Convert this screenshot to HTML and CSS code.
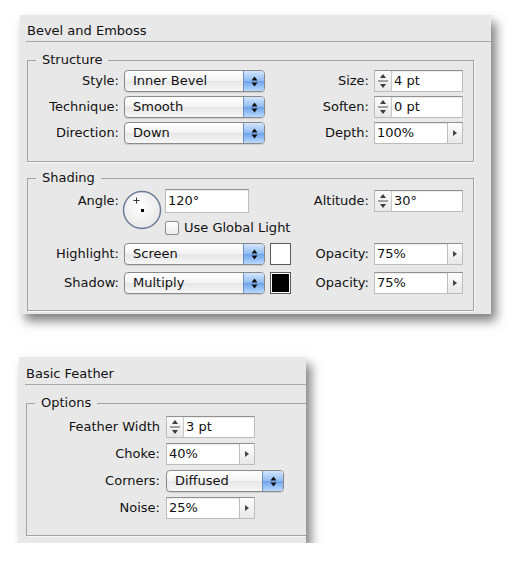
FILE: index.html
```html
<!DOCTYPE html>
<html>
<head>
    <title>Effects</title>
    <link rel="stylesheet" href="styles.css">
</head>
<body>
    <div class="page">
        <!-- Bevel and Emboss panel -->
        <section class="panel panel-bevel">
            <h2 class="panel-title">Bevel and Emboss</h2>

            <fieldset class="group group-structure">
                <legend>Structure</legend>
                <div class="grid grid-structure">
                    <label>Style:</label>
                    <div class="popup">
                        <span class="popup-value">Inner Bevel</span>
                        <span class="popup-arrows"><svg width="7" height="11" viewBox="0 0 7 11"><polygon points="0.5,4.5 3.5,0.5 6.5,4.5"/><polygon points="0.5,6.5 3.5,10.5 6.5,6.5"/></svg></span>
                    </div>
                    <label class="label-right">Size:</label>
                    <div class="field">
                        <span class="stepper"><svg width="16" height="20" viewBox="0 0 16 20"><polygon points="5,7 8,3 11,7"/><line x1="3" y1="10" x2="13" y2="10"/><polygon points="5,13 8,17 11,13"/></svg></span>
                        <span class="field-value">4 pt</span>
                    </div>

                    <label>Technique:</label>
                    <div class="popup">
                        <span class="popup-value">Smooth</span>
                        <span class="popup-arrows"><svg width="7" height="11" viewBox="0 0 7 11"><polygon points="0.5,4.5 3.5,0.5 6.5,4.5"/><polygon points="0.5,6.5 3.5,10.5 6.5,6.5"/></svg></span>
                    </div>
                    <label class="label-right">Soften:</label>
                    <div class="field">
                        <span class="stepper"><svg width="16" height="20" viewBox="0 0 16 20"><polygon points="5,7 8,3 11,7"/><line x1="3" y1="10" x2="13" y2="10"/><polygon points="5,13 8,17 11,13"/></svg></span>
                        <span class="field-value">0 pt</span>
                    </div>

                    <label>Direction:</label>
                    <div class="popup">
                        <span class="popup-value">Down</span>
                        <span class="popup-arrows"><svg width="7" height="11" viewBox="0 0 7 11"><polygon points="0.5,4.5 3.5,0.5 6.5,4.5"/><polygon points="0.5,6.5 3.5,10.5 6.5,6.5"/></svg></span>
                    </div>
                    <label class="label-right">Depth:</label>
                    <div class="field">
                        <span class="field-value">100%</span>
                        <span class="slider-btn"><svg width="4" height="6" viewBox="0 0 4 6"><polygon points="0,0 4,3 0,6"/></svg></span>
                    </div>
                </div>
            </fieldset>

            <fieldset class="group group-shading">
                <legend>Shading</legend>
                <div class="grid grid-shading">
                    <label class="label-top">Angle:</label>
                    <div class="angle">
                        <svg class="dial" width="40" height="40" viewBox="0 0 40 40">
                            <defs>
                                <radialGradient id="dialFill" cx="0.45" cy="0.4" r="0.65">
                                    <stop offset="0" stop-color="#ffffff"/>
                                    <stop offset="1" stop-color="#e6e6e6"/>
                                </radialGradient>
                            </defs>
                            <circle cx="20" cy="20" r="18.5" fill="url(#dialFill)" stroke="#6d7b98" stroke-width="1.5"/>
                            <g stroke="#333" stroke-width="1">
                                <line x1="11.5" y1="10.5" x2="17.5" y2="10.5"/>
                                <line x1="14.5" y1="7.5" x2="14.5" y2="13.5"/>
                            </g>
                            <rect x="19" y="19" width="3" height="3" fill="#000"/>
                        </svg>
                        <div class="angle-side">
                            <div class="field field-angle">
                                <span class="field-value">120°</span>
                            </div>
                            <label class="check">
                                <span class="checkbox"></span>
                                Use Global Light
                            </label>
                        </div>
                    </div>
                    <label class="label-right label-top">Altitude:</label>
                    <div class="field field-top">
                        <span class="stepper"><svg width="16" height="20" viewBox="0 0 16 20"><polygon points="5,7 8,3 11,7"/><line x1="3" y1="10" x2="13" y2="10"/><polygon points="5,13 8,17 11,13"/></svg></span>
                        <span class="field-value">30°</span>
                    </div>

                    <label>Highlight:</label>
                    <div class="popup">
                        <span class="popup-value">Screen</span>
                        <span class="popup-arrows"><svg width="7" height="11" viewBox="0 0 7 11"><polygon points="0.5,4.5 3.5,0.5 6.5,4.5"/><polygon points="0.5,6.5 3.5,10.5 6.5,6.5"/></svg></span>
                    </div>
                    <span class="swatch"><span class="swatch-color swatch-white"></span></span>
                    <label class="label-right">Opacity:</label>
                    <div class="field">
                        <span class="field-value">75%</span>
                        <span class="slider-btn"><svg width="4" height="6" viewBox="0 0 4 6"><polygon points="0,0 4,3 0,6"/></svg></span>
                    </div>

                    <label>Shadow:</label>
                    <div class="popup">
                        <span class="popup-value">Multiply</span>
                        <span class="popup-arrows"><svg width="7" height="11" viewBox="0 0 7 11"><polygon points="0.5,4.5 3.5,0.5 6.5,4.5"/><polygon points="0.5,6.5 3.5,10.5 6.5,6.5"/></svg></span>
                    </div>
                    <span class="swatch"><span class="swatch-color swatch-black"></span></span>
                    <label class="label-right">Opacity:</label>
                    <div class="field">
                        <span class="field-value">75%</span>
                        <span class="slider-btn"><svg width="4" height="6" viewBox="0 0 4 6"><polygon points="0,0 4,3 0,6"/></svg></span>
                    </div>
                </div>
            </fieldset>
        </section>

        <!-- Basic Feather panel -->
        <section class="panel panel-feather">
            <h2 class="panel-title">Basic Feather</h2>

            <fieldset class="group group-options">
                <legend>Options</legend>
                <div class="grid grid-options">
                    <label>Feather Width</label>
                    <div class="field">
                        <span class="stepper"><svg width="16" height="20" viewBox="0 0 16 20"><polygon points="5,7 8,3 11,7"/><line x1="3" y1="10" x2="13" y2="10"/><polygon points="5,13 8,17 11,13"/></svg></span>
                        <span class="field-value">3 pt</span>
                    </div>

                    <label>Choke:</label>
                    <div class="field">
                        <span class="field-value">40%</span>
                        <span class="slider-btn"><svg width="4" height="6" viewBox="0 0 4 6"><polygon points="0,0 4,3 0,6"/></svg></span>
                    </div>

                    <label>Corners:</label>
                    <div class="popup popup-corners">
                        <span class="popup-value">Diffused</span>
                        <span class="popup-arrows"><svg width="7" height="11" viewBox="0 0 7 11"><polygon points="0.5,4.5 3.5,0.5 6.5,4.5"/><polygon points="0.5,6.5 3.5,10.5 6.5,6.5"/></svg></span>
                    </div>

                    <label>Noise:</label>
                    <div class="field">
                        <span class="field-value">25%</span>
                        <span class="slider-btn"><svg width="4" height="6" viewBox="0 0 4 6"><polygon points="0,0 4,3 0,6"/></svg></span>
                    </div>
                </div>
            </fieldset>
        </section>
    </div>
</body>
</html>
```

FILE: styles.css
```css
body {
    margin: 0;
    background-color: #fff;
    font-family: "DejaVu Sans", Verdana, sans-serif;
    font-size: 13px;
    color: #111;
}

.page {
    display: flex;
    flex-direction: column;
    align-items: flex-start;
    gap: 43px;
    padding: 15px 0 0 20px;
}

/* Panels */

.panel {
    background-color: #e8e8e8;
    box-shadow: 5px 7px 10px rgba(0, 0, 0, 0.5);
}

.panel-bevel {
    width: 471px;
    padding-bottom: 3px;
}

.panel-feather {
    width: 287px;
    margin-left: -1px;
    padding-bottom: 7px;
    overflow: hidden;
}

.panel-title {
    margin: 0 0 0 6px;
    padding: 8px 0 2px 1px;
    font-size: 13px;
    font-weight: normal;
    line-height: 16px;
    border-bottom: 1px solid #a9a9a9;
}

.panel-feather .panel-title {
    padding-top: 9px;
}

/* Group boxes */

.group {
    margin: 10px 17px 0 7px;
    padding: 0 10px 0 0;
    border: 1px solid #a3a3a3;
    box-shadow: 1px 1px 0 #f7f7f7;
    min-width: 0;
}

.group legend {
    margin-left: 8px;
    padding: 0 6px;
    line-height: 16px;
}

.group-shading {
    margin-top: 8px;
}

.group-options {
    margin-right: 0;
    border-right: none;
}

/* Form grids */

.grid {
    display: grid;
    column-gap: 5px;
    align-items: center;
}

.grid label {
    text-align: right;
    line-height: 22px;
}

.grid-structure {
    grid-template-columns: 91px 141px 21px 1fr 89px;
    grid-auto-rows: 22px;
    row-gap: 4px;
    padding: 2px 0 17px;
}

.grid-shading {
    grid-template-columns: 91px 141px 21px 1fr 89px;
    grid-template-rows: 47px 22px 22px;
    row-gap: 7px;
    padding: 3px 0 16px;
}

.grid-options {
    grid-template-columns: 133px auto;
    grid-auto-rows: 22px;
    row-gap: 5px;
    justify-content: start;
    column-gap: 6px;
    padding: 5px 0 16px;
}

.label-right {
    grid-column: 4;
}

.grid .label-top {
    align-self: start;
    line-height: 24px;
}

.field-top {
    align-self: start;
    margin-top: 1px;
}

/* Pop-up menus */

.popup {
    display: flex;
    height: 20px;
    border: 1px solid #8a8a8a;
    border-radius: 4px;
    background: linear-gradient(#ffffff, #f3f3f3 50%, #e6e6e6 51%, #f6f6f6);
    box-shadow: 0 1px 1px rgba(0, 0, 0, 0.12);
    overflow: hidden;
}

.popup-value {
    flex: 1;
    padding-left: 8px;
    line-height: 20px;
    white-space: nowrap;
}

.popup-arrows {
    width: 20px;
    display: flex;
    align-items: center;
    justify-content: center;
    border-left: 1px solid #6f8fc2;
    background: linear-gradient(#d3e5fc, #93bdf2 48%, #6ea3ea 52%, #b9daff);
}

.popup-arrows svg {
    fill: #111;
}

.popup-corners {
    width: 116px;
}

/* Text fields */

.field {
    display: flex;
    height: 20px;
    width: 87px;
    background-color: #fff;
    border: 1px solid #bcbcbc;
    border-top-color: #8f8f8f;
    box-shadow: inset 0 1px 1px rgba(0, 0, 0, 0.08);
}

.field-value {
    flex: 1;
    padding-left: 2px;
    line-height: 20px;
    white-space: nowrap;
}

.stepper {
    width: 16px;
    border-right: 1px solid #c8c8c8;
    background: linear-gradient(#fafafa, #e9e9e9);
}

.stepper svg {
    display: block;
    fill: #3c3c3c;
    stroke: #555;
}

.stepper svg polygon {
    stroke: none;
}

.slider-btn {
    width: 14px;
    display: flex;
    align-items: center;
    justify-content: center;
    border-left: 1px solid #bdbdbd;
    background: linear-gradient(#fdfdfd, #e8e8e8);
}

.slider-btn svg {
    fill: #444;
}

/* Angle control */

.angle {
    grid-column: 2 / span 2;
    align-self: start;
    display: flex;
    align-items: flex-start;
}

.dial {
    display: block;
    margin: 1px 0 0 -2px;
}

.angle-side {
    margin-left: 3px;
}

.field-angle {
    width: 82px;
    height: 22px;
}

.field-angle .field-value {
    line-height: 22px;
}

.grid .check {
    display: flex;
    align-items: center;
    gap: 5px;
    margin-top: 8px;
    line-height: 14px;
    text-align: left;
}

.checkbox {
    width: 12px;
    height: 12px;
    border: 1px solid #8c8c8c;
    border-radius: 2px;
    background: linear-gradient(#ffffff, #ececec);
}

/* Colour swatches */

.swatch {
    width: 17px;
    height: 18px;
    border: 1px solid #5a5a5a;
    padding: 1px;
    background-color: #fff;
}

.swatch-color {
    display: block;
    width: 100%;
    height: 100%;
}

.swatch-white {
    background-color: #fff;
}

.swatch-black {
    background-color: #000;
}
```
